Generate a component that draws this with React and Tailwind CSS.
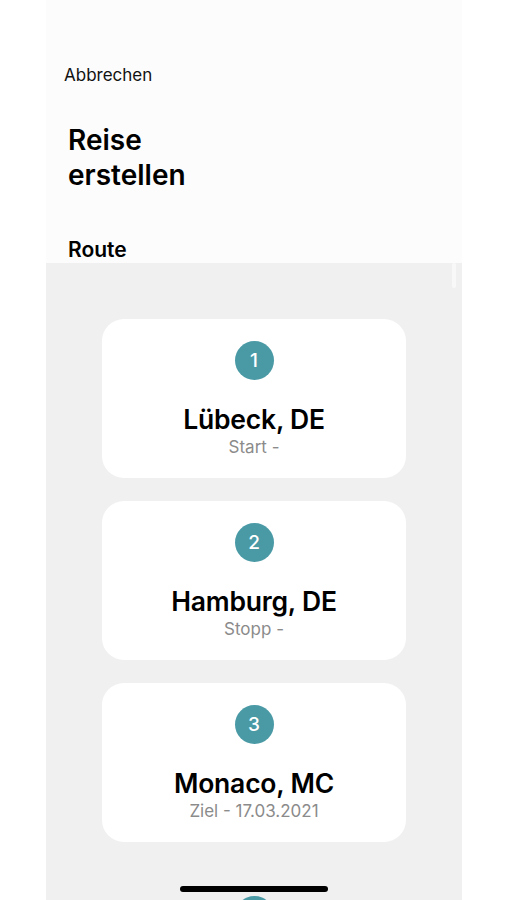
const stops = [
  { n: 1, city: "Lübeck, DE", sub: "Start -" },
  { n: 2, city: "Hamburg, DE", sub: "Stopp -" },
  { n: 3, city: "Monaco, MC", sub: "Ziel - 17.03.2021" },
];

function StopCard({ n, city, sub }) {
  return (
    <div className="w-[304px] h-[159px] shrink-0 rounded-[22px] bg-white flex flex-col items-center pt-[22px]">
      <div className="w-[39px] h-[39px] rounded-full bg-[#4a9aa6] flex items-center justify-center text-white text-[19px] font-medium leading-none">
        {n}
      </div>
      <div className="mt-[23px] text-[26.5px] font-semibold leading-[32px] text-black tracking-[-0.2px]">{city}</div>
      <div className="mt-[2px] text-[17px] leading-[21px] text-[#8b8b8b]">{sub}</div>
    </div>
  );
}

export default function App() {
  return (
    <div className="w-full h-[900px] bg-white flex overflow-hidden" style={{ fontFamily: "Inter, 'Noto Sans', sans-serif" }}>
      <div className="ml-[46px] w-[416px] h-full flex flex-col relative">
        <div className="h-[263px] shrink-0 bg-[#fcfcfc] flex flex-col">
          <div className="mt-[64px] ml-[18px] text-[17px] leading-[22px] text-[#111]">Abbrechen</div>
          <h1 className="mt-[37px] ml-[22px] text-[28px] font-semibold leading-[35px] text-black">
            Reise
            <br />
            erstellen
          </h1>
          <div className="mt-[45px] ml-[22px] text-[21px] font-semibold leading-[24px] text-black">Route</div>
        </div>
        <div className="flex-1 bg-[#f0f0f0] flex flex-col items-center pt-[56px] gap-[23px] relative">
          {stops.map((s) => (
            <StopCard key={s.n} {...s} />
          ))}
          <div className="mt-[31px] w-[39px] h-[39px] rounded-full bg-[#4a9aa6] shrink-0" />
          <div className="absolute right-[6px] top-0 w-[4px] h-[25px] rounded-full bg-[#f8f8f8]" />
        </div>
        <div className="absolute left-[134px] top-[886px] w-[148px] h-[6px] rounded-full bg-black" />
      </div>
    </div>
  );
}
